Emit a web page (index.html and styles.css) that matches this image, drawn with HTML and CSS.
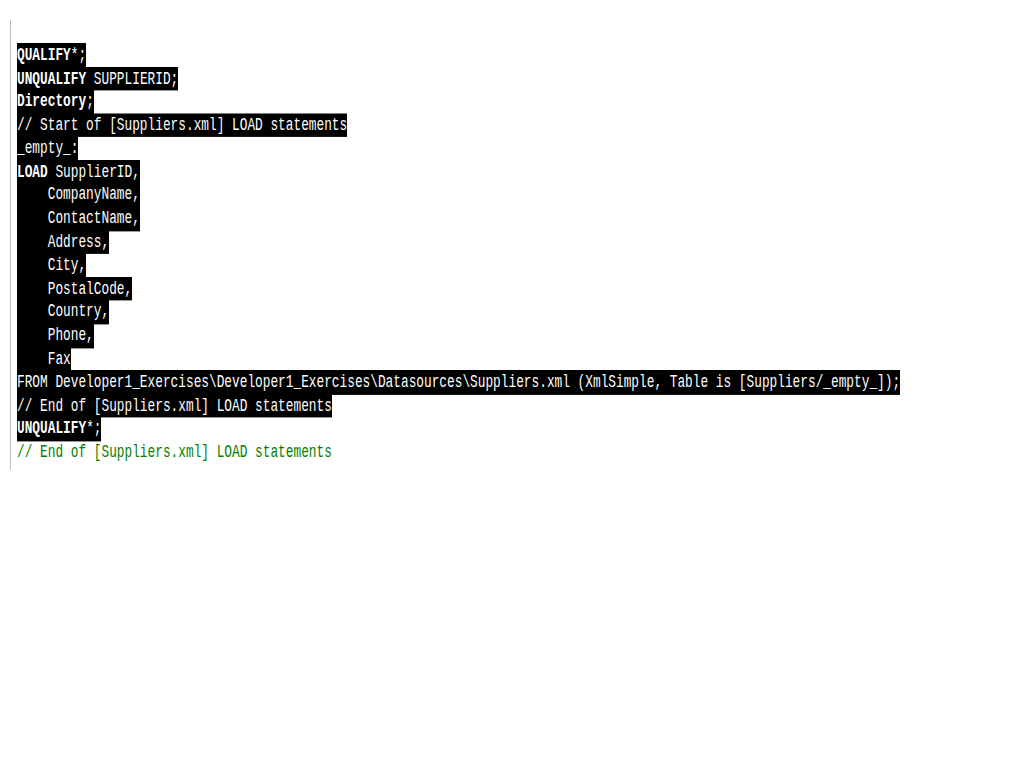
FILE: index.html
```html
<!DOCTYPE html>
<html>
<head>
<meta charset="utf-8">
<link rel="stylesheet" href="styles.css">
</head>
<body>
<div class="editor">
  <div class="code">
    <div class="line"><span class="hl"><b>QUALIFY</b>*;</span></div>
    <div class="line"><span class="hl"><b>UNQUALIFY</b> SUPPLIERID;</span></div>
    <div class="line"><span class="hl"><b>Directory</b>;</span></div>
    <div class="line"><span class="hl">// Start of [Suppliers.xml] LOAD statements</span></div>
    <div class="line"><span class="hl">_empty_:</span></div>
    <div class="line"><span class="hl"><b>LOAD</b> SupplierID,</span></div>
    <div class="line"><span class="hl">    CompanyName,</span></div>
    <div class="line"><span class="hl">    ContactName,</span></div>
    <div class="line"><span class="hl">    Address,</span></div>
    <div class="line"><span class="hl">    City,</span></div>
    <div class="line"><span class="hl">    PostalCode,</span></div>
    <div class="line"><span class="hl">    Country,</span></div>
    <div class="line"><span class="hl">    Phone,</span></div>
    <div class="line"><span class="hl">    Fax</span></div>
    <div class="line"><span class="hl">FROM Developer1_Exercises\Developer1_Exercises\Datasources\Suppliers.xml (XmlSimple, Table is [Suppliers/_empty_]);</span></div>
    <div class="line"><span class="hl">// End of [Suppliers.xml] LOAD statements</span></div>
    <div class="line"><span class="hl"><b>UNQUALIFY</b>*;</span></div>
    <div class="line"><span class="comment">// End of [Suppliers.xml] LOAD statements</span></div>
  </div>
</div>
</body>
</html>
```

FILE: styles.css
```css
html, body {
  margin: 0;
  padding: 0;
  background: #ffffff;
}

.editor {
  margin-left: 10px;
  margin-top: 20px;
  height: 450px;
  border-left: 1px solid #c0c0c0;
  padding-top: 23px;
  padding-left: 6px;
  box-sizing: border-box;
}

.code {
  font-family: "Liberation Mono", "DejaVu Sans Mono", monospace;
  font-size: 12.8px;
  line-height: 15.58px;
  transform: scaleY(1.5);
  transform-origin: top left;
}

.line {
  height: 15.58px;
  white-space: pre;
}

.hl {
  display: inline-block;
  background: #000000;
  color: #ffffff;
  line-height: 15.58px;
  box-shadow: 0 0.6px 0 #000000;
}

.hl b {
  font-weight: bold;
}

.comment {
  color: #008000;
}
```
